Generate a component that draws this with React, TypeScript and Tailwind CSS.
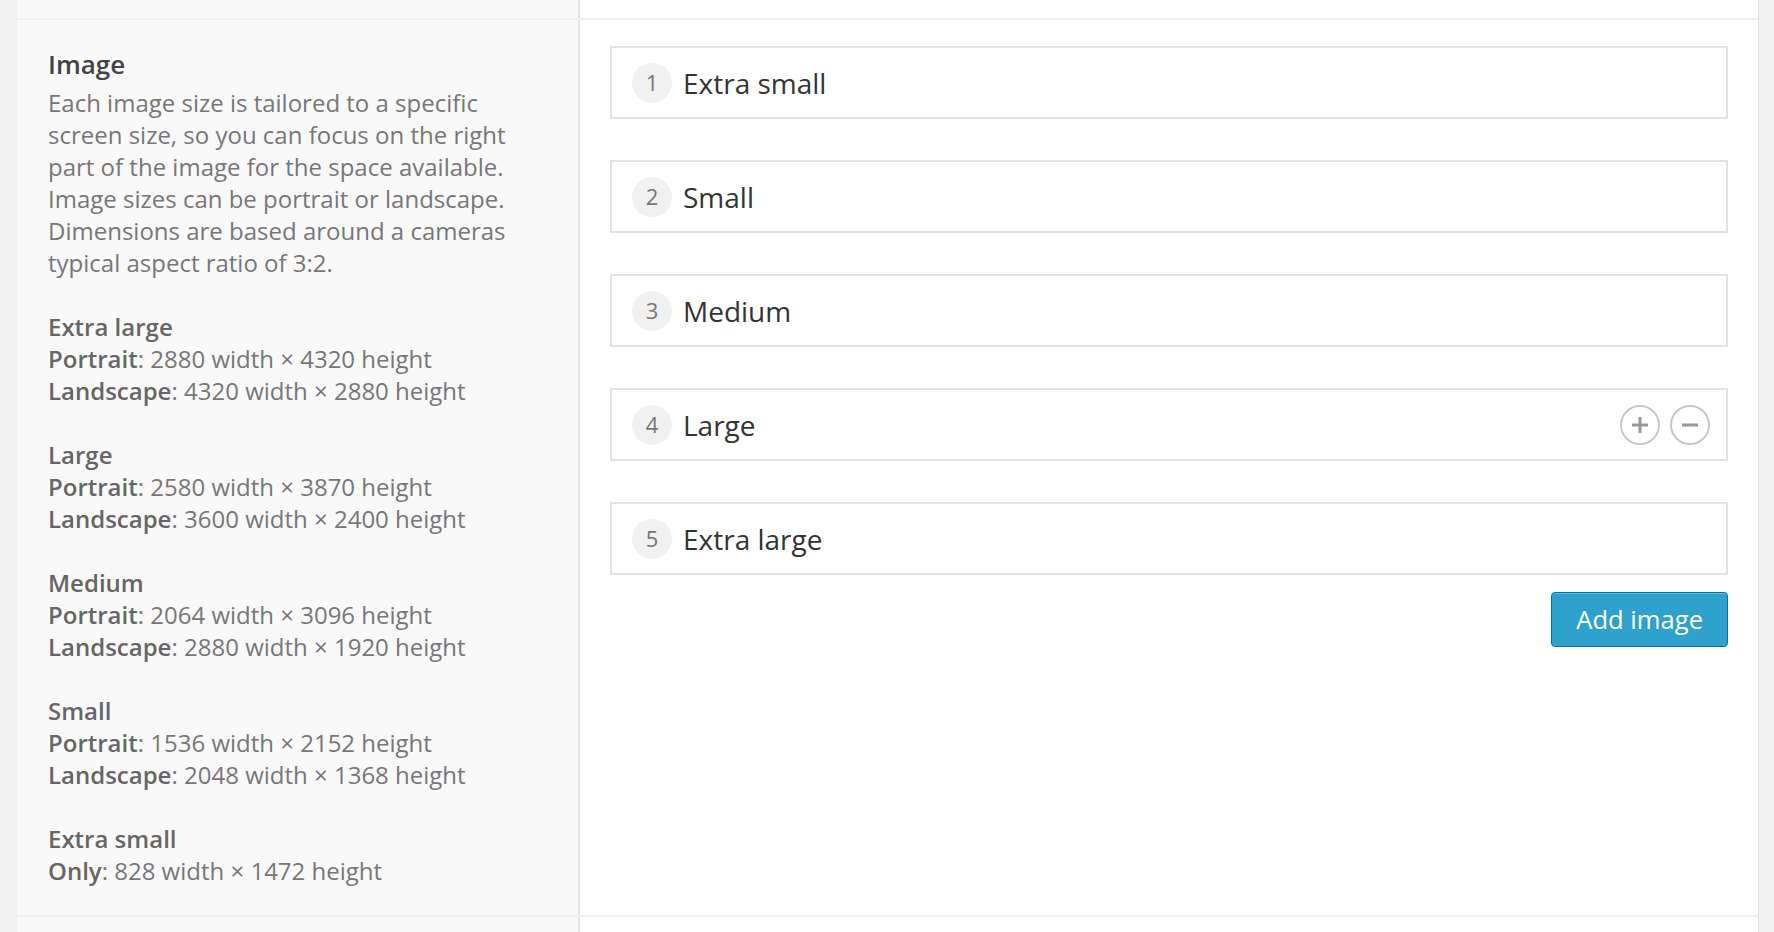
import React from 'react';

const sizes = [
  { name: 'Extra large', lines: [['Portrait', '2880 width × 4320 height'], ['Landscape', '4320 width × 2880 height']] },
  { name: 'Large', lines: [['Portrait', '2580 width × 3870 height'], ['Landscape', '3600 width × 2400 height']] },
  { name: 'Medium', lines: [['Portrait', '2064 width × 3096 height'], ['Landscape', '2880 width × 1920 height']] },
  { name: 'Small', lines: [['Portrait', '1536 width × 2152 height'], ['Landscape', '2048 width × 1368 height']] },
  { name: 'Extra small', lines: [['Only', '828 width × 1472 height']] },
];

const rows = ['Extra small', 'Small', 'Medium', 'Large', 'Extra large'];

function RoundButton({ minus }: { minus?: boolean }) {
  return (
    <button className="w-[40px] h-[40px] rounded-full border-2 border-[#c8c8c8] bg-white flex items-center justify-center">
      <svg width="18" height="18" viewBox="0 0 18 18">
        <rect x="1" y="7.5" width="16" height="3" fill="#999" />
        {!minus && <rect x="7.5" y="1" width="3" height="16" fill="#999" />}
      </svg>
    </button>
  );
}

export default function App() {
  return (
    <div
      className="w-full h-[932px] overflow-hidden bg-[#f1f1f1] pl-[17px] pr-[15px] flex"
      style={{ fontFamily: '"Open Sans", "Liberation Sans", sans-serif' }}
    >
      <div className="flex-1 flex flex-col border-r border-[#e5e5e5]">
        {/* previous row stub */}
        <div className="flex h-[18px]">
          <div className="w-[563px] bg-[#f9f9f9] border-r-2 border-[#e5e5e5]" />
          <div className="flex-1 bg-white" />
        </div>

        {/* main row */}
        <div className="flex border-y-2 border-[#f1f1f1]">
          <div className="w-[563px] shrink-0 bg-[#f9f9f9] border-r-2 border-[#e5e5e5] pl-[31px] pr-[20px] pt-[28px] pb-[28px]">
            <h3 className="text-[26px] leading-[32px] font-semibold text-[#444] mb-[7px]">Image</h3>
            <p className="text-[24px] leading-[32px] text-[#777]">
              Each image size is tailored to a specific screen size, so you can focus on the right part of the image
              for the space available. Image sizes can be portrait or landscape. Dimensions are based around a cameras
              typical aspect ratio of 3:2.
            </p>
            {sizes.map((s) => (
              <div key={s.name} className="mt-[32px] text-[24px] leading-[32px] text-[#777]">
                <div className="font-semibold text-[#666]">{s.name}</div>
                {s.lines.map(([k, v]) => (
                  <div key={k}>
                    <span className="font-semibold text-[#666]">{k}</span>: {v}
                  </div>
                ))}
              </div>
            ))}
          </div>

          <div className="flex-1 bg-white pt-[26px] px-[30px]">
            <div className="flex flex-col gap-[41px]">
              {rows.map((r, i) => (
                <div
                  key={r}
                  className="h-[73px] border-2 border-[#e2e2e2] bg-white flex items-center pl-[20px] pr-[16px]"
                >
                  <span className="w-[40px] h-[40px] rounded-full bg-[#f1f1f1] flex items-center justify-center text-[22px] text-[#777]">
                    {i + 1}
                  </span>
                  <span className="ml-[11px] text-[28px] text-[#333]">{r}</span>
                  {i === 3 && (
                    <div className="ml-auto flex gap-[10px]">
                      <RoundButton />
                      <RoundButton minus />
                    </div>
                  )}
                </div>
              ))}
            </div>
            <div className="flex justify-end mt-[17px]">
              <button className="h-[55px] px-[24px] rounded-[4px] border border-[#0074a2] bg-[#2ea2cc] text-white text-[25.6px] leading-none shadow-[inset_0_1px_0_rgba(120,200,230,0.6)]">
                Add image
              </button>
            </div>
          </div>
        </div>

        {/* next row stub */}
        <div className="flex flex-1">
          <div className="w-[563px] bg-[#f9f9f9] border-r-2 border-[#e5e5e5]" />
          <div className="flex-1 bg-white" />
        </div>
      </div>
    </div>
  );
}
